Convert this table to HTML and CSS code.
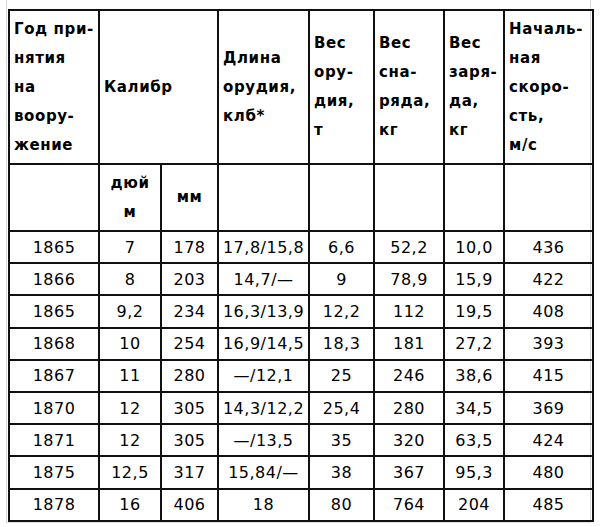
FILE: index.html
```html
<!DOCTYPE html>
<html lang="ru">
<head>
<meta charset="utf-8">
<link rel="stylesheet" href="styles.css">
</head>
<body>
<div class="frame">
<table class="guns">
<colgroup>
<col class="c1"><col class="c2"><col class="c3"><col class="c4"><col class="c5"><col class="c6"><col class="c7"><col class="c8">
</colgroup>
<thead>
<tr class="head">
<th>Год при-<br>нятия<br>на<br>воору-<br>жение</th>
<th colspan="2">Калибр</th>
<th>Длина<br>орудия,<br>клб*</th>
<th>Вес<br>ору-<br>дия,<br>т</th>
<th>Вес<br>сна-<br>ряда,<br>кг</th>
<th>Вес<br>заря-<br>да,<br>кг</th>
<th>Началь-<br>ная<br>скоро-<br>сть,<br>м/с</th>
</tr>
<tr class="sub">
<th></th>
<th class="center">дюй<br>м</th>
<th class="center">мм</th>
<th></th><th></th><th></th><th></th><th></th>
</tr>
</thead>
<tbody>
<tr><td>1865</td><td>7</td><td>178</td><td>17,8/15,8</td><td>6,6</td><td>52,2</td><td>10,0</td><td>436</td></tr>
<tr><td>1866</td><td>8</td><td>203</td><td>14,7/—</td><td>9</td><td>78,9</td><td>15,9</td><td>422</td></tr>
<tr><td>1865</td><td>9,2</td><td>234</td><td>16,3/13,9</td><td>12,2</td><td>112</td><td>19,5</td><td>408</td></tr>
<tr><td>1868</td><td>10</td><td>254</td><td>16,9/14,5</td><td>18,3</td><td>181</td><td>27,2</td><td>393</td></tr>
<tr><td>1867</td><td>11</td><td>280</td><td>—/12,1</td><td>25</td><td>246</td><td>38,6</td><td>415</td></tr>
<tr><td>1870</td><td>12</td><td>305</td><td>14,3/12,2</td><td>25,4</td><td>280</td><td>34,5</td><td>369</td></tr>
<tr><td>1871</td><td>12</td><td>305</td><td>—/13,5</td><td>35</td><td>320</td><td>63,5</td><td>424</td></tr>
<tr><td>1875</td><td>12,5</td><td>317</td><td>15,84/—</td><td>38</td><td>367</td><td>95,3</td><td>480</td></tr>
<tr><td>1878</td><td>16</td><td>406</td><td>18</td><td>80</td><td>764</td><td>204</td><td>485</td></tr>
</tbody>
</table>
</div>
</body>
</html>
```
FILE: styles.css
```css
html, body {
  margin: 0;
  padding: 0;
  background: #fff;
}
body {
  font-family: "DejaVu Sans", Verdana, sans-serif;
  color: #000;
}
.frame {
  margin-left: 6px;
  width: 583px;
  height: 513px;
  padding-top: 9px;
  border-left: 1px solid #d6d6d6;
  border-right: 1px solid #d6d6d6;
  border-bottom: 1px solid #e2e2e2;
  box-sizing: content-box;
}
.guns {
  margin-left: 1px;
  border-collapse: collapse;
  table-layout: fixed;
  width: 584px;
}
.c1 { width: 90px; }
.c2 { width: 62px; }
.c3 { width: 57px; }
.c4 { width: 91px; }
.c5 { width: 65px; }
.c6 { width: 70px; }
.c7 { width: 60px; }
.c8 { width: 89px; }
.guns th, .guns td {
  border: 2px solid #111;
  padding: 0 0 0 4px;
  vertical-align: middle;
}
.guns th {
  font-weight: bold;
  font-size: 15px;
  line-height: 29px;
  letter-spacing: 0.6px;
  text-align: left;
}
.guns th.center {
  text-align: center;
  padding: 0;
}
.head { height: 154px; }
.sub { height: 67px; }
.guns tbody tr { height: 32.2px; }
.guns td {
  font-size: 16px;
  letter-spacing: 0.5px;
  text-align: center;
  padding: 0;
  white-space: nowrap;
}
```
